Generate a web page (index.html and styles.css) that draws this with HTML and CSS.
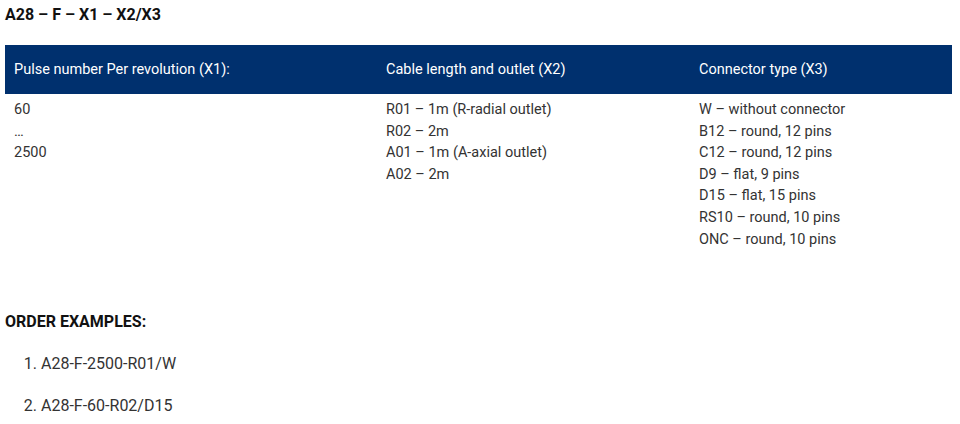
FILE: index.html
```html
<!DOCTYPE html>
<html>
<head>
<meta charset="utf-8">
<link rel="stylesheet" href="styles.css">
</head>
<body>
<h3 class="title">A28 – F – X1 – X2/X3</h3>
<table class="spec">
  <thead>
    <tr>
      <th class="c1">Pulse number Per revolution (X1):</th>
      <th class="c2">Cable length and outlet (X2)</th>
      <th class="c3">Connector type (X3)</th>
    </tr>
  </thead>
  <tbody>
    <tr>
      <td>60<br>…<br>2500</td>
      <td>R01 – 1m (R-radial outlet)<br>R02 – 2m<br>A01 – 1m (A-axial outlet)<br>A02 – 2m</td>
      <td>W – without connector<br>B12 – round, 12 pins<br>C12 – round, 12 pins<br>D9 – flat, 9 pins<br>D15 – flat, 15 pins<br>RS10 – round, 10 pins<br>ONC – round, 10 pins</td>
    </tr>
  </tbody>
</table>
<h3 class="subtitle">ORDER EXAMPLES:</h3>
<ol class="examples">
  <li>A28-F-2500-R01/W</li>
  <li>A28-F-60-R02/D15</li>
</ol>
</body>
</html>
```

FILE: styles.css
```css
html, body {
  margin: 0;
  padding: 0;
  background: #fff;
}
body {
  padding: 0 5px;
  font-family: Roboto, "Liberation Sans", sans-serif;
  font-size: 14.5px;
  color: #333;
}
.title {
  margin: 0;
  padding-top: 6px;
  font-size: 16px;
  line-height: 18px;
  font-weight: 700;
  color: #111;
}
.spec {
  margin-top: 21px;
  width: 947px;
  border-collapse: collapse;
}
.spec th {
  background: #00306e;
  color: #fff;
  font-weight: 400;
  text-align: left;
  height: 48px;
  padding: 1px 9px 0;
  font-size: 14.5px;
  line-height: 20px;
}
.spec .c1 { width: 354px; }
.spec .c2 { width: 295px; }
.spec td {
  vertical-align: top;
  padding: 5px 9px 5px;
  line-height: 21.6px;
  font-size: 14.5px;
}
.subtitle {
  margin: 58px 0 0;
  font-size: 16px;
  line-height: 18px;
  font-weight: 700;
  color: #111;
}
.examples {
  margin: 23px 0 0;
  padding-left: 36px;
  font-size: 16px;
}
.examples li {
  line-height: 20px;
  margin-bottom: 22px;
}
```
